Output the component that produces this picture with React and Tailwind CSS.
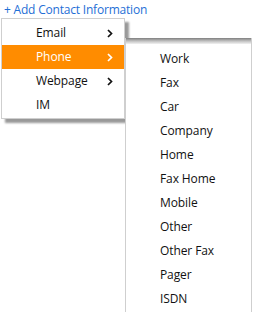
import React from 'react';

const font = { fontFamily: '"Open Sans", "Noto Sans", sans-serif' };

const Chevron = ({ color = '#111' }) => (
  <svg width="6" height="9" viewBox="0 0 6 9" className="block">
    <polyline points="1,1 4.5,4.5 1,8" fill="none" stroke={color} strokeWidth="1.7" />
  </svg>
);

const mainItems = [
  { label: 'Email', sub: true },
  { label: 'Phone', sub: true, active: true },
  { label: 'Webpage', sub: true },
  { label: 'IM', sub: false },
];

const phoneTypes = [
  'Work', 'Fax', 'Car', 'Company', 'Home', 'Fax Home',
  'Mobile', 'Other', 'Other Fax', 'Pager', 'ISDN',
];

export default function App() {
  return (
    <div className="relative w-[253px] h-[312px] bg-white overflow-hidden" style={font}>
      <div className="pl-[4px] pt-[2px] text-[12px] leading-[16px] text-[#1f6fd6] tracking-[-0.2px]">
        + Add Contact Information
      </div>

      {/* main menu */}
      <div className="absolute left-[1px] top-[18px] w-[124px] border border-[#cfcfcf] bg-white pt-[2px] pb-px shadow-[4px_4px_2px_rgba(0,0,0,0.4)] z-10">
        {mainItems.map((it) => (
          <div
            key={it.label}
            className={`flex items-center h-[24px] pl-[34px] pr-[11px] text-[12px] tracking-[-0.1px] ${
              it.active ? 'bg-[#ff8c00] text-white' : 'text-[#111]'
            }`}
          >
            <span className="flex-1">{it.label}</span>
            {it.sub && <Chevron color={it.active ? '#fff' : '#111'} />}
          </div>
        ))}
      </div>

      {/* phone submenu */}
      <div className="absolute left-[125px] top-[38px] w-[127px] h-[290px] bg-white border-x border-[#cfcfcf] z-20">
        <div className="h-[6px] bg-gradient-to-b from-[#7f7f7f] via-[#c0c0c0] to-[#f2f2f2]" />
        <div className="pt-[3px]">
          {phoneTypes.map((t) => (
            <div key={t} className="flex items-center h-[24px] pl-[34px] text-[12px] text-[#111] tracking-[-0.1px]">
              {t}
            </div>
          ))}
        </div>
      </div>
    </div>
  );
}
